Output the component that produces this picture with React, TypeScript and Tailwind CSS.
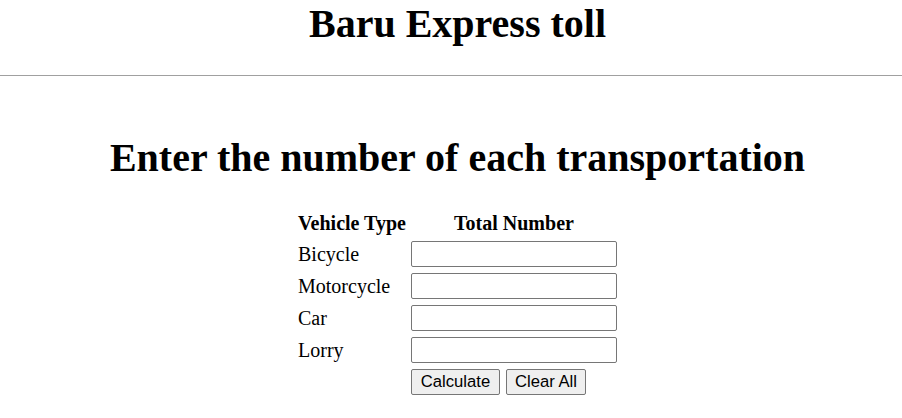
import React from "react";

const serif = { fontFamily: '"Liberation Serif", "Times New Roman", serif' };

export default function App() {
  const rows = ["Bicycle", "Motorcycle", "Car", "Lorry"];
  return (
    <div className="w-[902px] h-[418px] bg-white text-black overflow-hidden" style={serif}>
      <div className="pl-[13px] pt-[1px]">
        <h1 className="text-center text-[40px] leading-[46px] font-bold">Baru Express toll</h1>
      </div>
      <div className="mt-[28px] h-[1px] bg-[#a0a0a0]" />
      <div className="pl-[13px]">
        <h2 className="mt-[59px] text-center text-[40px] leading-[46px] font-bold">
          Enter the number of each transportation
        </h2>
        <div className="mt-[31px] flex justify-center">
          <div className="grid grid-cols-[113px_206px] gap-y-[6px] text-[20px] leading-[23px]">
            <div className="font-bold">Vehicle Type</div>
            <div className="font-bold text-center">Total Number</div>
            {rows.map((r) => (
              <React.Fragment key={r}>
                <div className="flex items-center h-[26px]">{r}</div>
                <input
                  type="text"
                  className="h-[26px] w-[206px] border border-[#767676] rounded-[2px] bg-white outline-none"
                />
              </React.Fragment>
            ))}
            <div />
            <div className="flex gap-[6px]" style={{ fontFamily: '"Liberation Sans", Arial, sans-serif' }}>
              <button className="h-[26px] w-[89px] border border-[#767676] rounded-[2px] bg-[#efefef] text-[16.67px] leading-[20px] text-black">
                Calculate
              </button>
              <button className="h-[26px] w-[80px] border border-[#767676] rounded-[2px] bg-[#efefef] text-[16.67px] leading-[20px] text-black">
                Clear All
              </button>
            </div>
          </div>
        </div>
      </div>
    </div>
  );
}
